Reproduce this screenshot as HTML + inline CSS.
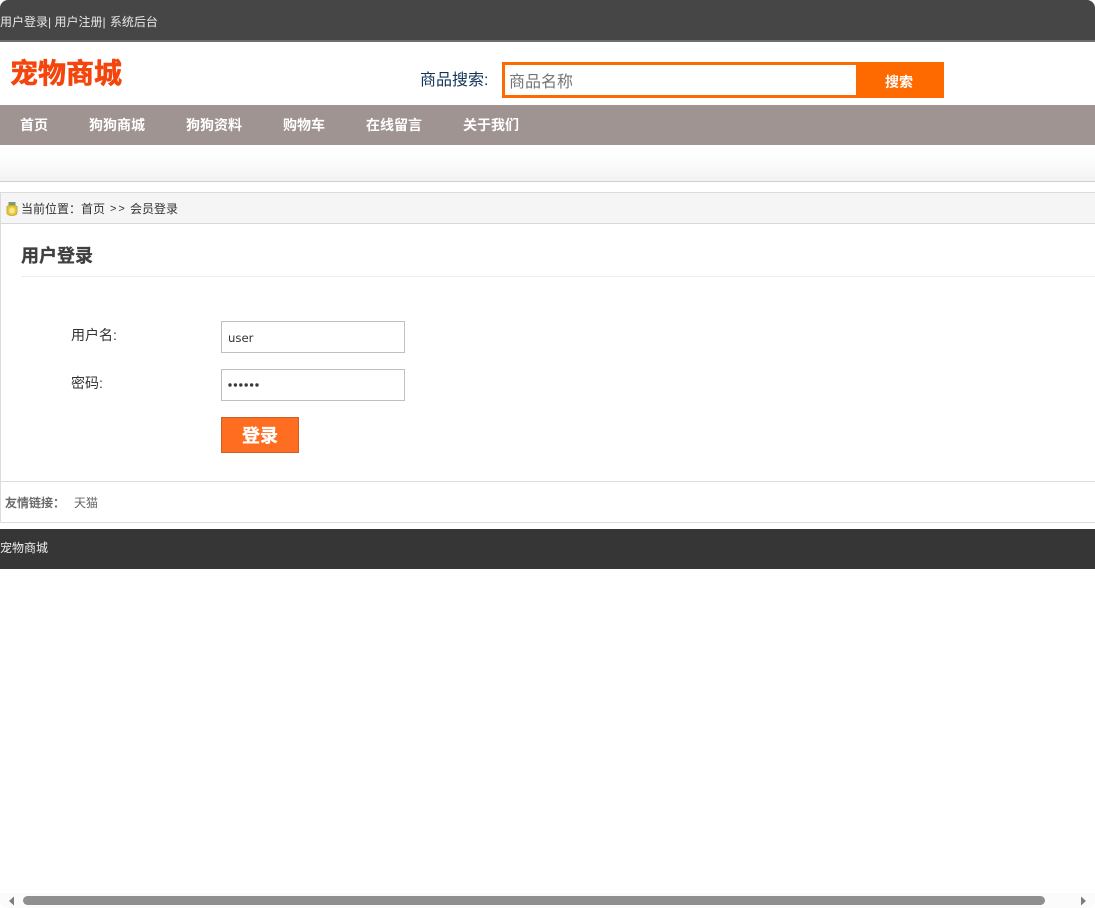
<!DOCTYPE html>
<html lang="zh">
<head>
<meta charset="utf-8">
<title>宠物商城</title>
<style>
html,body{margin:0;padding:0;background:#fff;width:1095px;height:908px;overflow:hidden}
body{position:relative;font-family:"Liberation Sans","Noto Sans CJK SC","WenQuanYi Zen Hei",sans-serif;color:#333}
.a{position:absolute;white-space:nowrap}
.r{position:absolute}
</style>
</head>
<body>
<div class="r" style="left:0;top:0;width:1095px;height:40px;background:#464646;border-radius:8px 8px 0 0"></div>
<div class="r" style="left:0;top:40px;width:1095px;height:2px;background:#6e6e6e"></div>
<div class="a" style="left:0;top:14px;font-size:12px;line-height:17px;color:#e8e8e8">用户登录| 用户注册| <span style="margin-left:1px">系统后台</span></div>

<div class="a" style="left:10px;top:55px;font-size:28px;line-height:38px;font-weight:bold;color:#f4450c;-webkit-text-stroke:0.6px #f4450c">宠物商城</div>
<div class="a" style="left:420px;top:70px;font-size:16px;line-height:22px;color:#10345a">商品搜索:</div>
<div class="r" style="left:502px;top:62px;width:442px;height:36px;background:#ff6a00"></div>
<div class="r" style="left:505px;top:65px;width:351px;height:30px;background:#fff"></div>
<div class="a" style="left:509px;top:71px;font-size:16px;line-height:24px;color:#757575">商品名称</div>
<div class="a" style="left:885px;top:72px;font-size:14px;line-height:20px;font-weight:bold;color:#fff;font-family:'WenQuanYi Zen Hei','Noto Sans CJK SC',sans-serif">搜索</div>

<div class="r" style="left:0;top:105px;width:1095px;height:40px;background:#a09492"></div>
<div style="font-family:'WenQuanYi Zen Hei','Noto Sans CJK SC',sans-serif;font-size:14px;font-weight:bold;color:#fff;line-height:20px">
<div class="a" style="left:20px;top:115px">首页</div>
<div class="a" style="left:89px;top:115px">狗狗商城</div>
<div class="a" style="left:186px;top:115px">狗狗资料</div>
<div class="a" style="left:283px;top:115px">购物车</div>
<div class="a" style="left:366px;top:115px">在线留言</div>
<div class="a" style="left:463px;top:115px">关于我们</div>
</div>

<div class="r" style="left:0;top:145px;width:1095px;height:36px;background:linear-gradient(#ffffff 0%,#fdfdfd 35%,#f3f3f3 100%)"></div>
<div class="r" style="left:0;top:181px;width:1095px;height:1px;background:#cfcfcf"></div>

<div class="r" style="left:0;top:192px;width:1095px;height:331px;box-sizing:border-box;border:1px solid #dcdcdc;border-right:0"></div>
<div class="r" style="left:1px;top:193px;width:1094px;height:30px;background:#f5f5f5"></div>
<div class="r" style="left:1px;top:223px;width:1094px;height:1px;background:#d8d8d8"></div>
<svg class="r" style="left:6px;top:202px" width="12" height="14" viewBox="0 0 12 14"><rect x="2.5" y="0" width="7" height="4" fill="#7f9a70"/><path d="M1 4.5Q6 2.5 11 4.5V10Q11 13.5 6 13.5Q1 13.5 1 10Z" fill="#e8c832" stroke="#c9ad3a" stroke-width="1"/><ellipse cx="6" cy="8.5" rx="2.8" ry="3" fill="#f7e68a"/></svg>
<div class="a" style="left:21px;top:201px;font-size:12px;line-height:17px;color:#333">当前位置：首页</div>
<div class="a" style="left:110px;top:201px;font-size:11px;line-height:17px;color:#333;letter-spacing:2px">&gt;&gt;</div>
<div class="a" style="left:130px;top:201px;font-size:12px;line-height:17px;color:#333">会员登录</div>

<div class="a" style="left:21px;top:244px;font-size:18px;line-height:25px;font-weight:bold;color:#404040;-webkit-text-stroke:0.3px #404040">用户登录</div>
<div class="r" style="left:21px;top:276px;width:1074px;height:1px;background:#eee"></div>

<div class="a" style="left:71px;top:326px;font-size:14px;line-height:19px;color:#333">用户名:</div>
<div class="r" style="left:221px;top:321px;width:184px;height:32px;box-sizing:border-box;border:1px solid #c0c0c0;background:#fff"></div>
<div class="a" style="left:228px;top:330px;line-height:16px;color:#333;font-family:'DejaVu Sans',sans-serif;font-size:11.7px">user</div>

<div class="a" style="left:71px;top:374px;font-size:14px;line-height:19px;color:#333">密码:</div>
<div class="r" style="left:221px;top:369px;width:184px;height:32px;box-sizing:border-box;border:1px solid #c0c0c0;background:#fff"></div>
<svg class="r" style="left:228px;top:382px" width="34" height="6" viewBox="0 0 34 6" fill="#3a3a3a"><circle cx="2" cy="3" r="1.7"/><circle cx="7.4" cy="3" r="1.7"/><circle cx="12.8" cy="3" r="1.7"/><circle cx="18.2" cy="3" r="1.7"/><circle cx="23.6" cy="3" r="1.7"/><circle cx="29" cy="3" r="1.7"/></svg>

<div class="r" style="left:221px;top:417px;width:78px;height:36px;box-sizing:border-box;border:1px solid #c8602a;background:#ff6e20"></div>
<div class="a" style="left:242px;top:424px;font-size:18px;line-height:25px;font-weight:bold;color:#fff;-webkit-text-stroke:0.3px #fff">登录</div>

<div class="r" style="left:1px;top:481px;width:1094px;height:1px;background:#dcdcdc"></div>
<div class="a" style="left:5px;top:495px;font-size:12px;line-height:17px;font-weight:500;color:#666;-webkit-text-stroke:0.2px #666">友情链接：</div>
<div class="a" style="left:74px;top:495px;font-size:12px;line-height:17px;color:#666">天猫</div>

<div class="r" style="left:0;top:529px;width:1095px;height:40px;background:#363636"></div>
<div class="a" style="left:0;top:540px;font-size:12px;line-height:17px;color:#f0f0f0">宠物商城</div>

<div class="r" style="left:0;top:893px;width:1095px;height:15px;background:#fbfbfb;border-radius:0 0 8px 8px"></div>
<div class="r" style="left:23px;top:896px;width:1022px;height:9px;background:#8f8f8f;border-radius:5px"></div>
<svg class="r" style="left:8px;top:896px" width="8" height="10" viewBox="0 0 8 10"><path d="M6 0.5V9.5L1 5Z" fill="#7d7d7d"/></svg>
<svg class="r" style="left:1079px;top:896px" width="8" height="10" viewBox="0 0 8 10"><path d="M2 0.5V9.5L7 5Z" fill="#7d7d7d"/></svg>
</body>
</html>
